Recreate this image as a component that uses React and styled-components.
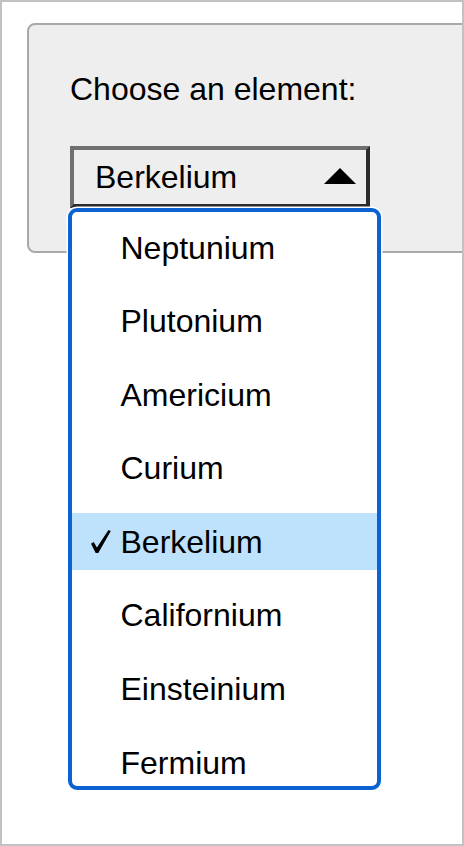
import React, { useState } from "react";
import styled, { createGlobalStyle } from "styled-components";

const GlobalStyle = createGlobalStyle`
  html, body {
    margin: 0;
    padding: 0;
    background: #ffffff;
  }
  * {
    box-sizing: border-box;
  }
`;

const Frame = styled.div`
  width: 464px;
  height: 846px;
  border: 2px solid #c2c2c2;
  overflow: hidden;
  background: #ffffff;
  font-family: "Liberation Sans", Arial, sans-serif;
  color: #000000;
`;

const Panel = styled.div`
  margin: 21px 0 0 25px;
  width: 520px;
  background: #eeeeee;
  border: 2px solid #a9a9a9;
  border-radius: 8px;
  padding: 46px 0 43px 41px;
  display: flex;
  flex-direction: column;
  align-items: flex-start;
  gap: 39px;
`;

const Label = styled.label`
  font-size: 32px;
  line-height: 36px;
`;

const SelectWrap = styled.div`
  position: relative;
  width: 300px;
`;

const SelectBox = styled.div`
  height: 62px;
  width: 300px;
  border-style: solid;
  border-width: 4px;
  border-color: #707070 #2b2b2b #2b2b2b #707070;
  background: #eeeeee;
  display: flex;
  align-items: center;
  justify-content: space-between;
  padding: 0 10px 0 21px;
  font-size: 32px;
  line-height: 36px;
  cursor: default;
`;

const Arrow = styled.span`
  width: 0;
  height: 0;
  border-left: 16px solid transparent;
  border-right: 16px solid transparent;
  border-bottom: 16px solid #000000;
  margin-top: -2px;
`;

const Picker = styled.ul`
  position: absolute;
  left: -2.5px;
  top: 62px;
  width: 313px;
  height: 582px;
  margin: 0;
  padding: 7px 0 0;
  list-style: none;
  background: #ffffff;
  border: 4px solid #0b63d3;
  border-radius: 9px;
  box-shadow: 0 0 0 1.5px #ffffff;
  overflow: hidden;
  display: flex;
  flex-direction: column;
  gap: 16.6px;
`;

const Option = styled.li`
  flex: none;
  height: 57px;
  display: flex;
  align-items: center;
  padding-left: 18px;
  font-size: 32px;
  line-height: 36px;
  background: ${(p) => (p.$selected ? "#bee2fc" : "transparent")};
`;

const CheckSlot = styled.span`
  width: 31px;
  flex: none;
  display: flex;
  align-items: center;
  padding-left: 1.5px;
  margin-top: -1px;
`;

const CheckMark = () => (
  <svg width="20" height="23" viewBox="0 0 20 23">
    <path
      d="M0 13.8 L2.7 12.1 L5.9 17.6 L17.5 0 L19.8 1.1 L7.3 23 L4.7 23 Z"
      fill="#000000"
    />
  </svg>
);

const elements = [
  "Neptunium",
  "Plutonium",
  "Americium",
  "Curium",
  "Berkelium",
  "Californium",
  "Einsteinium",
  "Fermium",
];

export default function App() {
  const [value, setValue] = useState("Berkelium");
  const [open, setOpen] = useState(true);

  return (
    <>
      <GlobalStyle />
      <Frame>
        <Panel>
          <Label>Choose an element:</Label>
          <SelectWrap>
            <SelectBox onClick={() => setOpen(!open)}>
              <span>{value}</span>
              <Arrow />
            </SelectBox>
            {open && (
              <Picker>
                {elements.map((el) => (
                  <Option
                    key={el}
                    $selected={el === value}
                    onClick={() => setValue(el)}
                  >
                    <CheckSlot>{el === value && <CheckMark />}</CheckSlot>
                    {el}
                  </Option>
                ))}
              </Picker>
            )}
          </SelectWrap>
        </Panel>
      </Frame>
    </>
  );
}
